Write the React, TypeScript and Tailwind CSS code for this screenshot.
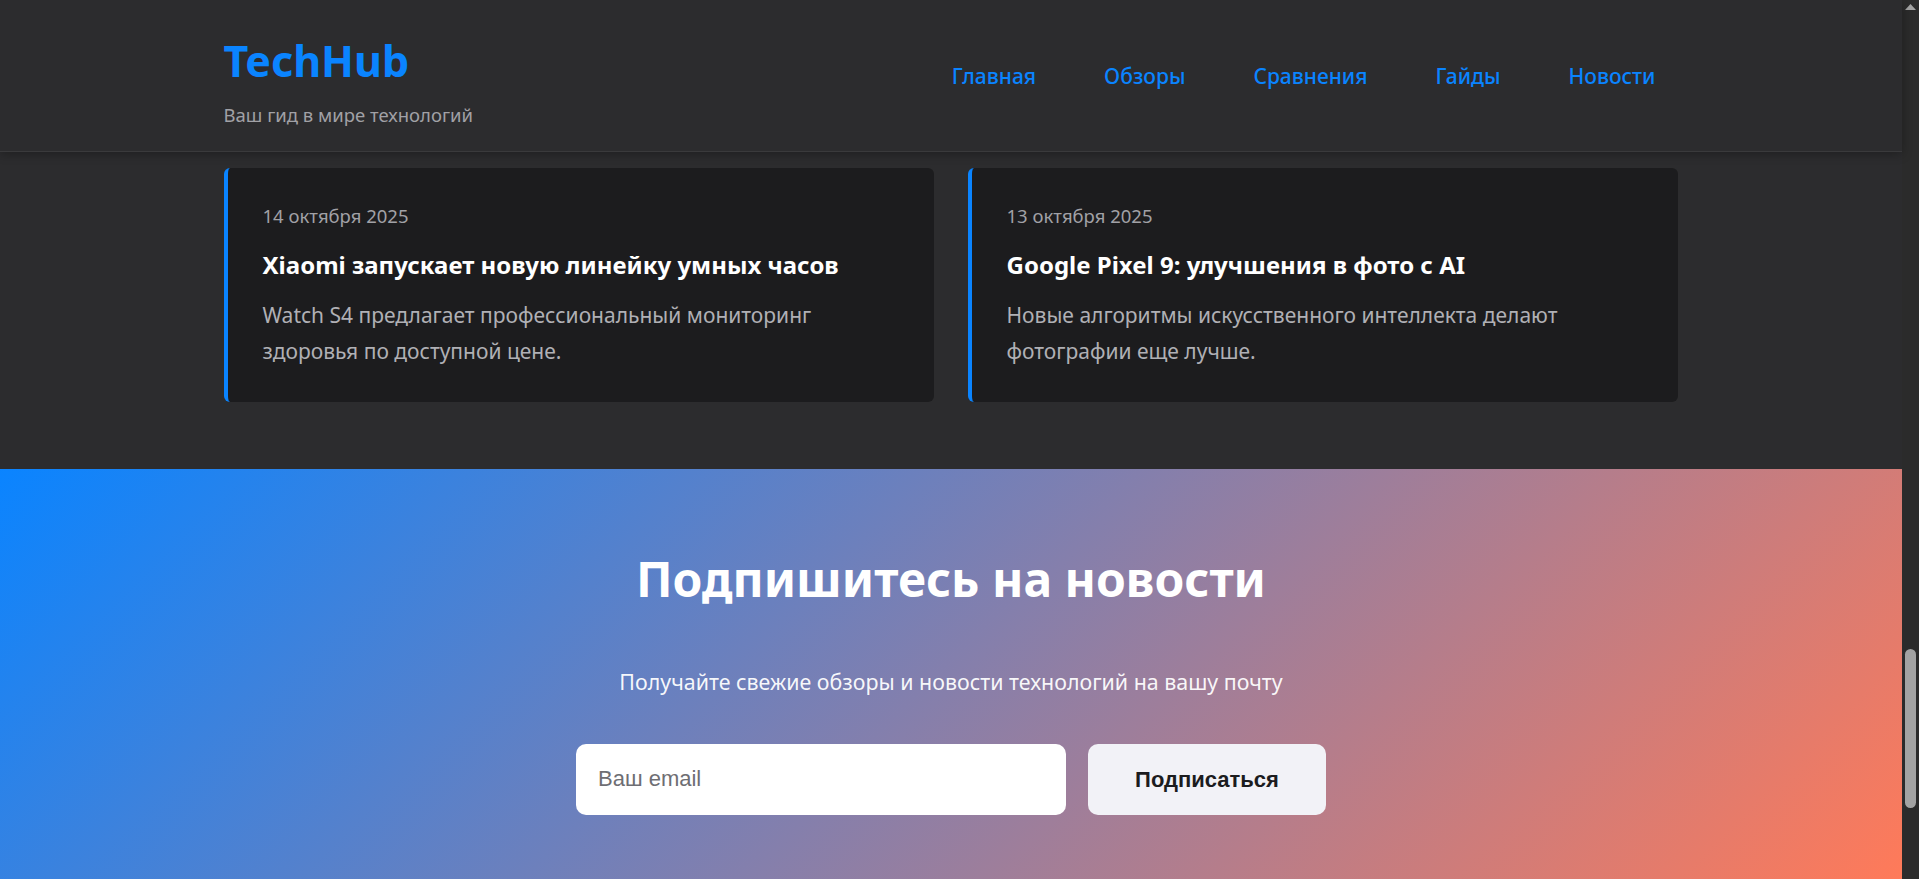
import React from "react";

const navLinks = ["Главная", "Обзоры", "Сравнения", "Гайды", "Новости"];

const news = [
  {
    date: "14 октября 2025",
    title: "Xiaomi запускает новую линейку умных часов",
    text: "Watch S4 предлагает профессиональный мониторинг здоровья по доступной цене.",
  },
  {
    date: "13 октября 2025",
    title: "Google Pixel 9: улучшения в фото с AI",
    text: "Новые алгоритмы искусственного интеллекта делают фотографии еще лучше.",
  },
];

const Header = () => (
  <header className="h-[152px] shrink-0 bg-[#2c2c2e] border-b border-[#3a3a3c] shadow-[0_2px_10px_rgba(0,0,0,0.3)] relative z-10">
    <div className="w-[1455px] mx-auto flex justify-between items-start pt-[35px]">
      <div>
        <h1 className="text-[43px] leading-[1.2] font-bold text-[#0a84ff]">TechHub</h1>
        <p className="mt-[14px] text-[18.5px] leading-[1.5] text-[#a1a1a6]">Ваш гид в мире технологий</p>
      </div>
      <nav className="flex gap-[22px] mt-[18px]">
        {navLinks.map((l) => (
          <a key={l} href="#" className="px-[23px] py-[8px] text-[21px] leading-[1.5] font-medium text-[#0a84ff]">
            {l}
          </a>
        ))}
      </nav>
    </div>
  </header>
);

const NewsCard = ({ date, title, text }: { date: string; title: string; text: string }) => (
  <article className="w-[710px] bg-[#1c1c1e] border-l-4 border-[#0a84ff] rounded-[6px] pl-[35px] pr-[35px] pt-[34px] pb-[33px]">
    <div className="text-[18.5px] leading-[1.5] text-[#a1a1a6]">{date}</div>
    <h3 className="mt-[19px] text-[24px] leading-[1.3] font-bold text-white">{title}</h3>
    <p className="mt-[17px] text-[21px] leading-[36px] text-[#b0b0b5]">{text}</p>
  </article>
);

const Subscribe = () => (
  <section className="flex-1 bg-[linear-gradient(135deg,#0a84ff_0%,#ff7a59_100%)] pt-[81px] text-center">
    <h2 className="text-[48px] leading-[1.2] font-bold text-white">Подпишитесь на новости</h2>
    <p className="mt-[58px] text-[21.4px] leading-[1.5] text-white/95">
      Получайте свежие обзоры и новости технологий на вашу почту
    </p>
    <form className="mt-[46px] flex justify-center gap-[22px]" onSubmit={(e) => e.preventDefault()}>
      <input
        type="email"
        placeholder="Ваш email"
        className="w-[490px] h-[71px] rounded-[10px] bg-white px-[22px] text-[22px] text-[#1c1c1e] placeholder:text-[#6e6e73] outline-none font-['Liberation_Sans',Arial,sans-serif]"
      />
      <button className="w-[238px] h-[71px] rounded-[10px] bg-[#f2f2f7] text-[22px] font-bold text-[#1c1c1e] font-['Liberation_Sans',Arial,sans-serif]">
        Подписаться
      </button>
    </form>
  </section>
);

const Scrollbar = () => (
  <div className="w-[17px] shrink-0 bg-[#2b2b2b] relative">
    <svg className="absolute top-[4px] left-[3px]" width="11" height="6" viewBox="0 0 11 6">
      <path d="M5.5 0 L11 6 L0 6 Z" fill="#a3a3a3" />
    </svg>
    <div className="absolute left-[3px] top-[649px] w-[11px] h-[159px] rounded-full bg-[#a3a3a3]" />
  </div>
);

export default function App() {
  return (
    <div className="h-[879px] w-full overflow-hidden flex bg-[#2c2c2e] font-['Noto_Sans',sans-serif]">
      <div className="flex-1 min-w-0 flex flex-col">
        <Header />
        <main className="pt-[16px] pb-[67px]">
          <div className="w-[1455px] mx-auto flex gap-[34px]">
            {news.map((n) => (
              <NewsCard key={n.title} {...n} />
            ))}
          </div>
        </main>
        <Subscribe />
      </div>
      <Scrollbar />
    </div>
  );
}
